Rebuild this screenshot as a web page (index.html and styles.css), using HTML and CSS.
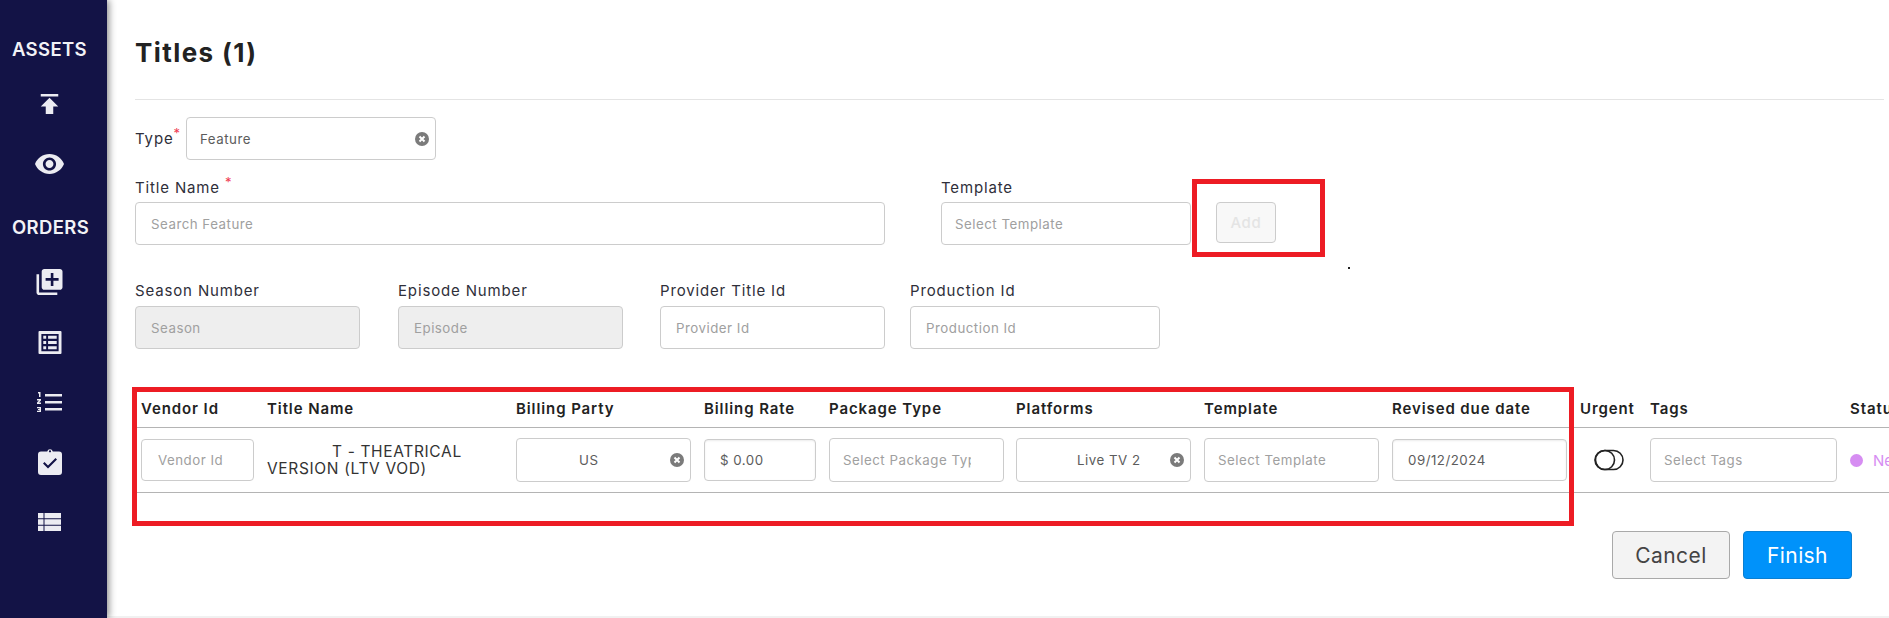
FILE: index.html
```html
<!DOCTYPE html>
<html lang="en">
<head>
<meta charset="utf-8">
<title>Titles</title>
<link rel="stylesheet" href="styles.css">
</head>
<body>
<div class="app">
  <nav class="sidebar">
    <div class="nav-heading">ASSETS</div>
    <div class="nav-icon"><svg class="ic-publish" viewBox="5 4 14 16"><path d="M5 4v2h14V4H5zm0 10h4v6h6v-6h4l-7-7-7 7z"/></svg></div>
    <div class="nav-icon"><svg class="ic-eye" viewBox="1 4.5 22 15"><path fill-rule="evenodd" d="M12 4.5C7 4.5 2.73 7.61 1 12c1.73 4.39 6 7.5 11 7.5s9.27-3.11 11-7.5c-1.73-4.39-6-7.5-11-7.5zM12 17c-2.76 0-5-2.24-5-5s2.24-5 5-5 5 2.24 5 5-2.24 5-5 5zm0-8c-1.66 0-3 1.34-3 3s1.34 3 3 3 3-1.34 3-3-1.34-3-3-3z"/></svg></div>
    <div class="nav-heading">ORDERS</div>
    <div class="nav-icon"><svg class="ic-lib" viewBox="2 2 20 20"><path d="M4 6H2v14c0 1.1.9 2 2 2h14v-2H4V6zm16-4H8c-1.1 0-2 .9-2 2v12c0 1.1.9 2 2 2h12c1.1 0 2-.9 2-2V4c0-1.1-.9-2-2-2zm-1 9h-4v4h-2v-4H9V9h4V5h2v4h4v2z"/></svg></div>
    <div class="nav-icon"><svg class="ic-list" viewBox="0 0 24 24"><path fill-rule="evenodd" d="M1 0h22a1 1 0 0 1 1 1v22a1 1 0 0 1-1 1H1a1 1 0 0 1-1-1V1a1 1 0 0 1 1-1zm2 3v18h18V3H3zm2 2h3v3H5V5zm5 0h9v3h-9V5zM5 10.500h3v3H5v-3zm5 0h9v3h-9v-3zM5 16h3v3H5v-3zm5 0h9v3h-9v-3z"/></svg></div>
    <div class="nav-icon"><svg class="ic-num" viewBox="0 0 25 20"><path d="M8 2h17v2.400H8zM8 9h17v2.400H8zM8 16h17v2.400H8zM1 0h2.500v5H2V1.500H1zM0 7h4v1.500l-2 2h2V12H0v-1.500l2-2H0zM0 15h4v5H0v-1.300h2.500v-.6H1v-1.200h1.500v-.6H0z"/></svg></div>
    <div class="nav-icon"><svg class="ic-clip" viewBox="0 0 24 26"><path fill-rule="evenodd" d="M3 2.500h6.200a2.900 2.900 0 0 1 5.600 0H21a3 3 0 0 1 3 3V23a3 3 0 0 1-3 3H3a3 3 0 0 1-3-3V5.500a3 3 0 0 1 3-3zm9-1.300a1.100 1.100 0 1 0 0 2.200 1.100 1.100 0 0 0 0-2.200zM10 19.500l9-9-1.500-1.500L10 16.500l-3.500-3.500L5 14.500z"/></svg></div>
    <div class="nav-icon"><svg class="ic-table" viewBox="0 0 23 18"><path d="M0 0h5.500v5.200H0zM6.500 0H23v5.200H6.500zM0 6.200h5.500v5.600H0zM6.500 6.200H23v5.600H6.500zM0 12.800h5.500V18H0zM6.500 12.800H23V18H6.500z"/></svg></div>
  </nav>

  <main class="content">
    <header class="page-head"><h1 class="page-title">Titles (1)</h1></header>

    <div class="type-row">
      <span class="label type-label">Type<sup class="req">*</sup></span>
      <div class="input type-input"><span class="value">Feature</span>
        <svg class="clear" viewBox="0 0 14 14"><circle cx="7" cy="7" r="7"/><path d="M4.500 4.500l5 5m0-5l-5 5"/></svg></div>
    </div>

    <div class="form-row row-title">
      <div class="field title-field">
        <span class="label">Title Name <sup class="req">*</sup></span>
        <div class="input roomy"><span class="ph">Search Feature</span></div>
      </div>
      <div class="field template-field">
        <span class="label">Template</span>
        <div class="input"><span class="ph">Select Template</span></div>
      </div>
      <button class="add-btn" type="button">Add</button>
    </div>

    <div class="form-row row-ids">
      <div class="field w-season">
        <span class="label">Season Number</span>
        <div class="input roomy disabled"><span class="ph">Season</span></div>
      </div>
      <div class="field w-episode">
        <span class="label">Episode Number</span>
        <div class="input roomy disabled"><span class="ph">Episode</span></div>
      </div>
      <div class="field w-provider">
        <span class="label">Provider Title Id</span>
        <div class="input roomy"><span class="ph">Provider Id</span></div>
      </div>
      <div class="field w-production">
        <span class="label">Production Id</span>
        <div class="input roomy"><span class="ph">Production Id</span></div>
      </div>
    </div>

    <section class="table">
      <div class="grid grid-head">
        <div>Vendor Id</div><div>Title Name</div><div>Billing Party</div><div>Billing Rate</div>
        <div>Package Type</div><div>Platforms</div><div>Template</div><div>Revised due date</div>
        <div>Urgent</div><div>Tags</div><div>Status</div>
      </div>
      <div class="grid grid-row">
        <div class="input roomy cell-sm"><span class="ph vendor-ph">Vendor Id</span></div>
        <div class="title-cell"><span class="redacted"></span>T - THEATRICAL VERSION (LTV VOD)</div>
        <div class="input"><span class="value pad-us">US</span>
          <svg class="clear" viewBox="0 0 14 14"><circle cx="7" cy="7" r="7"/><path d="M4.500 4.500l5 5m0-5l-5 5"/></svg></div>
        <div class="input cell-sm shade"><span class="value rate">$ 0.00</span></div>
        <div class="input pkg"><span class="ph clipped">Select Package Type</span></div>
        <div class="input"><span class="value pad-live">Live TV 2</span>
          <svg class="clear" viewBox="0 0 14 14"><circle cx="7" cy="7" r="7"/><path d="M4.500 4.500l5 5m0-5l-5 5"/></svg></div>
        <div class="input"><span class="ph">Select Template</span></div>
        <div class="input cell-sm shade"><span class="value date">09/12/2024</span></div>
        <div class="toggle-cell"><svg class="toggle" viewBox="0 0 30 22"><rect x="1" y="1.500" width="28" height="19" rx="9.500"/><circle cx="11" cy="11" r="9.500"/></svg></div>
        <div class="input"><span class="ph">Select Tags</span></div>
        <div class="status"><span class="status-dot"></span><span class="status-text">New</span></div>
      </div>
    </section>

    <div class="actions">
      <button class="btn btn-cancel" type="button">Cancel</button>
      <button class="btn btn-finish" type="button">Finish</button>
    </div>
    <div class="foot-line"></div>
  </main>
</div>

<div class="mark mark-add"></div>
<div class="mark mark-table"></div>
<span class="speck"></span>
</body>
</html>
```

FILE: styles.css
```css
* { box-sizing: border-box; }
html, body { margin: 0; height: 100%; overflow: hidden; background: #fff; }
body { font-family: Inter, "Liberation Sans", sans-serif; color: #2b2b2b; position: relative; }

.app { display: flex; width: 1889px; height: 618px; }

/* sidebar */
.sidebar {
  flex: 0 0 107px; background: #131346; padding-top: 16px;
  box-shadow: 2px 0 7px rgba(0,0,0,.45); position: relative; z-index: 1;
  display: flex; flex-direction: column;
}
.nav-heading {
  height: 58px; padding: 8px 0 0 12px; display: flex; align-items: center;
  color: #f2f2f6; font-size: 18.500px; font-weight: 600; letter-spacing: .35px;
}
.nav-icon { height: 60px; display: flex; align-items: center; justify-content: center; padding-right: 8px; }
.nav-icon svg { fill: #ecECf2; display: block; }
.ic-publish { width: 19px; height: 20px; }
.ic-eye { width: 29px; height: 20px; }
.ic-lib { width: 27px; height: 26px; }
.ic-list { width: 24px; height: 23px; }
.ic-num { width: 25px; height: 20px; }
.ic-clip { width: 24px; height: 26px; }
.ic-table { width: 23px; height: 18px; }

/* main */
.content { flex: 1; min-width: 0; padding-left: 28px; display: flex; flex-direction: column; overflow: hidden; }
.page-head { height: 100px; margin-right: 5px; border-bottom: 1px solid #e4e4e4; padding-top: 36px; }
.page-title { margin: 0; font-size: 26px; line-height: 34px; font-weight: 700; letter-spacing: 1.400px; color: #222; }

.label { display: block; font-size: 15px; line-height: 20px; letter-spacing: .85px; color: #2f2f3a; white-space: nowrap; }
.req { color: #ef3b52; font-size: 13px; line-height: 0; vertical-align: 6px; }
.row-title .label { position: relative; top: 1px; }

.input {
  height: 43px; border: 1px solid #ccc; border-radius: 4px; background: #fff;
  display: flex; align-items: center; justify-content: space-between;
  padding: 0 6px 0 13px; font-size: 13.300px; letter-spacing: .5px; overflow: hidden; white-space: nowrap;
}
.input.roomy { padding-left: 15px; }
.input.disabled { background: #eee; }
.ph { color: #a0a0a0; }
.value { color: #5c5c5c; }
.clear { width: 14px; height: 14px; flex: none; }
.clear circle { fill: #7b7b7b; }
.clear path { stroke: #fff; stroke-width: 2; fill: none; }

.type-row { display: flex; align-items: center; margin-top: 17px; }
.type-label { width: 51px; }
.type-input { width: 250px; }

.form-row { display: flex; align-items: flex-start; }
.field { display: flex; flex-direction: column; gap: 5px; }
.row-title { margin-top: 17px; }
.row-ids { margin-top: 36px; }
.title-field { width: 750px; margin-right: 56px; }
.template-field { width: 250px; margin-right: 25px; }
.add-btn {
  width: 60px; height: 41px; margin-top: 25px; border: 1px solid #ccc; border-radius: 4px;
  background: #f8f8f8; color: #e4e4e4; font: 500 15px Inter, "Liberation Sans", sans-serif; letter-spacing: .7px;
}
.w-season { width: 225px; margin-right: 38px; }
.w-episode { width: 225px; margin-right: 37px; }
.w-provider { width: 225px; margin-right: 25px; }
.w-production { width: 250px; }

/* table */
.table { margin-top: 43px; width: 1754px; flex: none; }
.grid {
  display: grid; padding-left: 6px; column-gap: 13px;
  grid-template-columns: 113px 236px 175px 112px 174px 175px 175px 175px 57px 187px 120px;
}
.grid-head { height: 36px; padding-bottom: 2px; align-items: center; border-bottom: 1px solid #b4b4b4; font-size: 15px; font-weight: 600; letter-spacing: .9px; color: #222; white-space: nowrap; }
.grid-row { height: 65px; align-items: center; border-bottom: 1px solid #b4b4b4; }
.grid-row .input { height: 44px; }
.grid-row .cell-sm { height: 42px; }
.grid-row .pkg { margin-right: -1px; }
.shade { box-shadow: inset 0 1px 2px rgba(0,0,0,.08); }
.title-cell { font-size: 15.500px; line-height: 17px; letter-spacing: .65px; color: #333; }
.redacted { display: inline-block; width: 65px; }
.pad-us { padding-left: 49px; }
.pad-live { padding-left: 47px; }
.vendor-ph { margin-left: 1px; }
.rate, .date { margin-left: 2px; }
.clipped { width: 128px; overflow: hidden; }
.toggle-cell { display: flex; padding-left: 14px; }
.toggle { width: 30px; height: 22px; }
.toggle rect, .toggle circle { fill: none; stroke: #222; stroke-width: 1.600; }
.status { display: flex; align-items: center; gap: 10px; }
.status-dot { flex: none; width: 13px; height: 13px; border-radius: 50%; background: #d68df2; }
.status-text { color: #d68df2; font-size: 15px; }

.actions { display: flex; justify-content: flex-end; gap: 13px; margin-top: 38px; padding-right: 37px; }
.btn { height: 48px; border-radius: 4px; font: 400 21px Inter, "Liberation Sans", sans-serif; letter-spacing: .4px; }
.btn-cancel { width: 118px; background: #f3f3f3; border: 1px solid #a9a9a9; color: #444; }
.btn-finish { width: 109px; background: #0092fa; border: 1px solid #0a7fd2; color: #fff; }
.foot-line { height: 2px; margin: 37px 0 0 -28px; background: #f1f1f1; }

/* review annotations laid over the page */
.mark { position: absolute; border: 5px solid #ed1c24; pointer-events: none; z-index: 2; }
.mark-add { left: 1192px; top: 179px; width: 133px; height: 78px; }
.mark-table { left: 132px; top: 387px; width: 1442px; height: 139px; }
.speck { position: absolute; left: 1348px; top: 267px; width: 2px; height: 2px; background: #222; }
```
